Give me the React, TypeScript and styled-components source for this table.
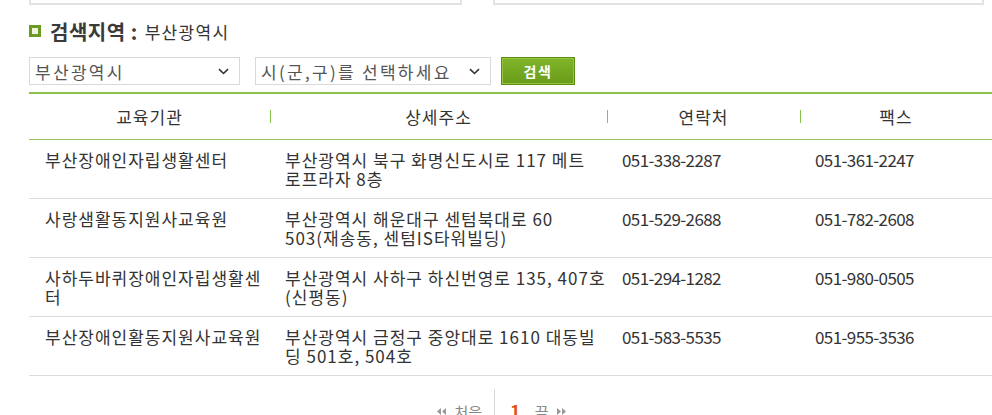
import React from 'react';
import styled, { createGlobalStyle } from 'styled-components';

const Global = createGlobalStyle`
  html, body { margin: 0; padding: 0; background: #fff; }
  body { font-family: "Noto Sans CJK KR", "Noto Sans", sans-serif; color: #333; overflow: hidden; }
`;

const Page = styled.div`
  width: 992px;
  padding-left: 29px;
  box-sizing: border-box;
`;

const TopBoxes = styled.div`
  display: flex;
  gap: 31px;
`;

const TopBox = styled.div<{ $w: number }>`
  width: ${(p) => p.$w}px;
  height: 3px;
  box-sizing: content-box;
  border: 2px solid #e2e2e2;
  border-top: none;
`;

const TitleRow = styled.div`
  display: flex;
  align-items: center;
  margin-top: 14px;
  height: 24px;
`;

const TitleIcon = styled.span`
  width: 6px;
  height: 6px;
  border: 3px solid #6c9a23;
  background: #eef5dc;
  margin-right: 9px;
  flex: none;
`;

const TitleStrong = styled.span`
  font-size: 20px;
  font-weight: 700;
  color: #3a3a3a;
  letter-spacing: 0.5px;
`;

const TitleValue = styled.span`
  font-size: 17px;
  letter-spacing: 1.3px;
  color: #333;
  margin-left: 7px;
`;

const FilterRow = styled.div`
  display: flex;
  align-items: center;
  margin-top: 14px;
  height: 28px;
`;

const SelectBox = styled.div<{ $w: number }>`
  width: ${(p) => p.$w}px;
  height: 28px;
  box-sizing: border-box;
  border: 1px solid #d9d9d9;
  display: flex;
  align-items: center;
  justify-content: space-between;
  padding: 0 10px 0 5px;
  font-size: 17px;
  letter-spacing: 2.3px;
  color: #555;
  margin-right: 15px;
  white-space: nowrap;
`;

const SearchButton = styled.button`
  margin-left: -5px;
  width: 74px;
  height: 28px;
  box-sizing: border-box;
  border: 1px solid #5f8d14;
  box-shadow: inset 0 0 0 1px #93c33f;
  background: linear-gradient(#80b52a, #6a9b1a);
  color: #fff;
  font-family: "Noto Sans CJK KR", sans-serif;
  font-size: 14px;
  font-weight: 700;
  letter-spacing: 1.5px;
  padding: 0;
`;

const Table = styled.table`
  margin-top: 7px;
  width: 963px;
  border-collapse: collapse;
  table-layout: fixed;
  border-top: 2px solid #8bc34a;
`;

const Th = styled.th<{ $sep?: boolean }>`
  position: relative;
  height: 45px;
  padding: 0;
  font-weight: 400;
  font-size: 17px;
  letter-spacing: 1px;
  color: #333;
  text-align: center;
  border-bottom: 1px solid #94c65c;
  &::before {
    content: '';
    display: ${(p) => (p.$sep ? 'block' : 'none')};
    position: absolute;
    left: 0;
    top: 16px;
    width: 1px;
    height: 13px;
    background: #8bc34a;
  }
`;

const Td = styled.td<{ $pl: number; $num?: boolean }>`
  padding: 10px 0 10px ${(p) => p.$pl}px;
  font-size: 17px;
  line-height: 19px;
  letter-spacing: ${(p) => (p.$num ? '-0.6px' : '1px')};
  color: #333;
  vertical-align: top;
  height: 38px;
  border-bottom: 1px solid #dcdcdc;
`;

const Line = styled.span`
  display: block;
  white-space: nowrap;
`;

const Pager = styled.div`
  width: 963px;
  display: flex;
  justify-content: center;
  align-items: flex-end;
  margin-top: 13px;
  height: 40px;
  padding-right: 18px;
  box-sizing: border-box;
`;

const PagerLink = styled.span`
  display: flex;
  align-items: center;
  gap: 8px;
  font-size: 15px;
  color: #888;
  padding-bottom: 7px;
`;

const PagerDivider = styled.span`
  width: 1px;
  align-self: stretch;
  background: #d8d8d8;
  margin: 0 12px;
`;

const PageNum = styled.span`
  font-size: 18px;
  font-weight: 700;
  color: #e2561c;
  padding-bottom: 6px;
  margin-right: 14px;
  margin-left: 3px;
`;

const Chevron = () => (
  <svg width="11" height="7" viewBox="0 0 11 7">
    <path d="M1 1.2 L5.5 5.5 L10 1.2" fill="none" stroke="#333" strokeWidth="1.6" />
  </svg>
);

const DoubleArrow = ({ dir }: { dir: 'l' | 'r' }) => (
  <svg width="9" height="7" viewBox="0 0 9 7" style={{ transform: dir === 'r' ? 'scaleX(-1)' : undefined }}>
    <path d="M0 3.5 L4 0 L4 7 Z M5 3.5 L9 0 L9 7 Z" fill="#999" />
  </svg>
);

const rows = [
  {
    name: ['부산장애인자립생활센터'],
    addr: ['부산광역시 북구 화명신도시로 117 메트', '로프라자 8층'],
    tel: '051-338-2287',
    fax: '051-361-2247',
  },
  {
    name: ['사랑샘활동지원사교육원'],
    addr: ['부산광역시 해운대구 센텀북대로 60', '503(재송동, 센텀IS타워빌딩)'],
    tel: '051-529-2688',
    fax: '051-782-2608',
  },
  {
    name: ['사하두바퀴장애인자립생활센', '터'],
    addr: ['부산광역시 사하구 하신번영로 135, 407호', '(신평동)'],
    tel: '051-294-1282',
    fax: '051-980-0505',
  },
  {
    name: ['부산장애인활동지원사교육원'],
    addr: ['부산광역시 금정구 중앙대로 1610 대동빌', '딩 501호, 504호'],
    tel: '051-583-5535',
    fax: '051-955-3536',
  },
];

export default function App() {
  return (
    <Page>
      <Global />
      <TopBoxes>
        <TopBox $w={429} />
        <TopBox $w={487} />
      </TopBoxes>
      <TitleRow>
        <TitleIcon />
        <TitleStrong>검색지역 :</TitleStrong>
        <TitleValue>부산광역시</TitleValue>
      </TitleRow>
      <FilterRow>
        <SelectBox $w={211}>
          <span>부산광역시</span>
          <Chevron />
        </SelectBox>
        <SelectBox $w={236}>
          <span>시(군,구)를 선택하세요</span>
          <Chevron />
        </SelectBox>
        <SearchButton>검색</SearchButton>
      </FilterRow>
      <Table>
        <colgroup>
          <col style={{ width: 241 }} />
          <col style={{ width: 337 }} />
          <col style={{ width: 193 }} />
          <col style={{ width: 192 }} />
        </colgroup>
        <thead>
          <tr>
            <Th>교육기관</Th>
            <Th $sep>상세주소</Th>
            <Th $sep>연락처</Th>
            <Th $sep>팩스</Th>
          </tr>
        </thead>
        <tbody>
          {rows.map((r) => (
            <tr key={r.tel}>
              <Td $pl={16}>
                {r.name.map((l) => (
                  <Line key={l}>{l}</Line>
                ))}
              </Td>
              <Td $pl={15}>
                {r.addr.map((l) => (
                  <Line key={l}>{l}</Line>
                ))}
              </Td>
              <Td $pl={15} $num>
                {r.tel}
              </Td>
              <Td $pl={15} $num>
                {r.fax}
              </Td>
            </tr>
          ))}
        </tbody>
      </Table>
      <Pager>
        <PagerLink>
          <DoubleArrow dir="l" />
          처음
        </PagerLink>
        <PagerDivider />
        <PageNum>1</PageNum>
        <PagerLink>
          끝
          <DoubleArrow dir="r" />
        </PagerLink>
      </Pager>
    </Page>
  );
}
